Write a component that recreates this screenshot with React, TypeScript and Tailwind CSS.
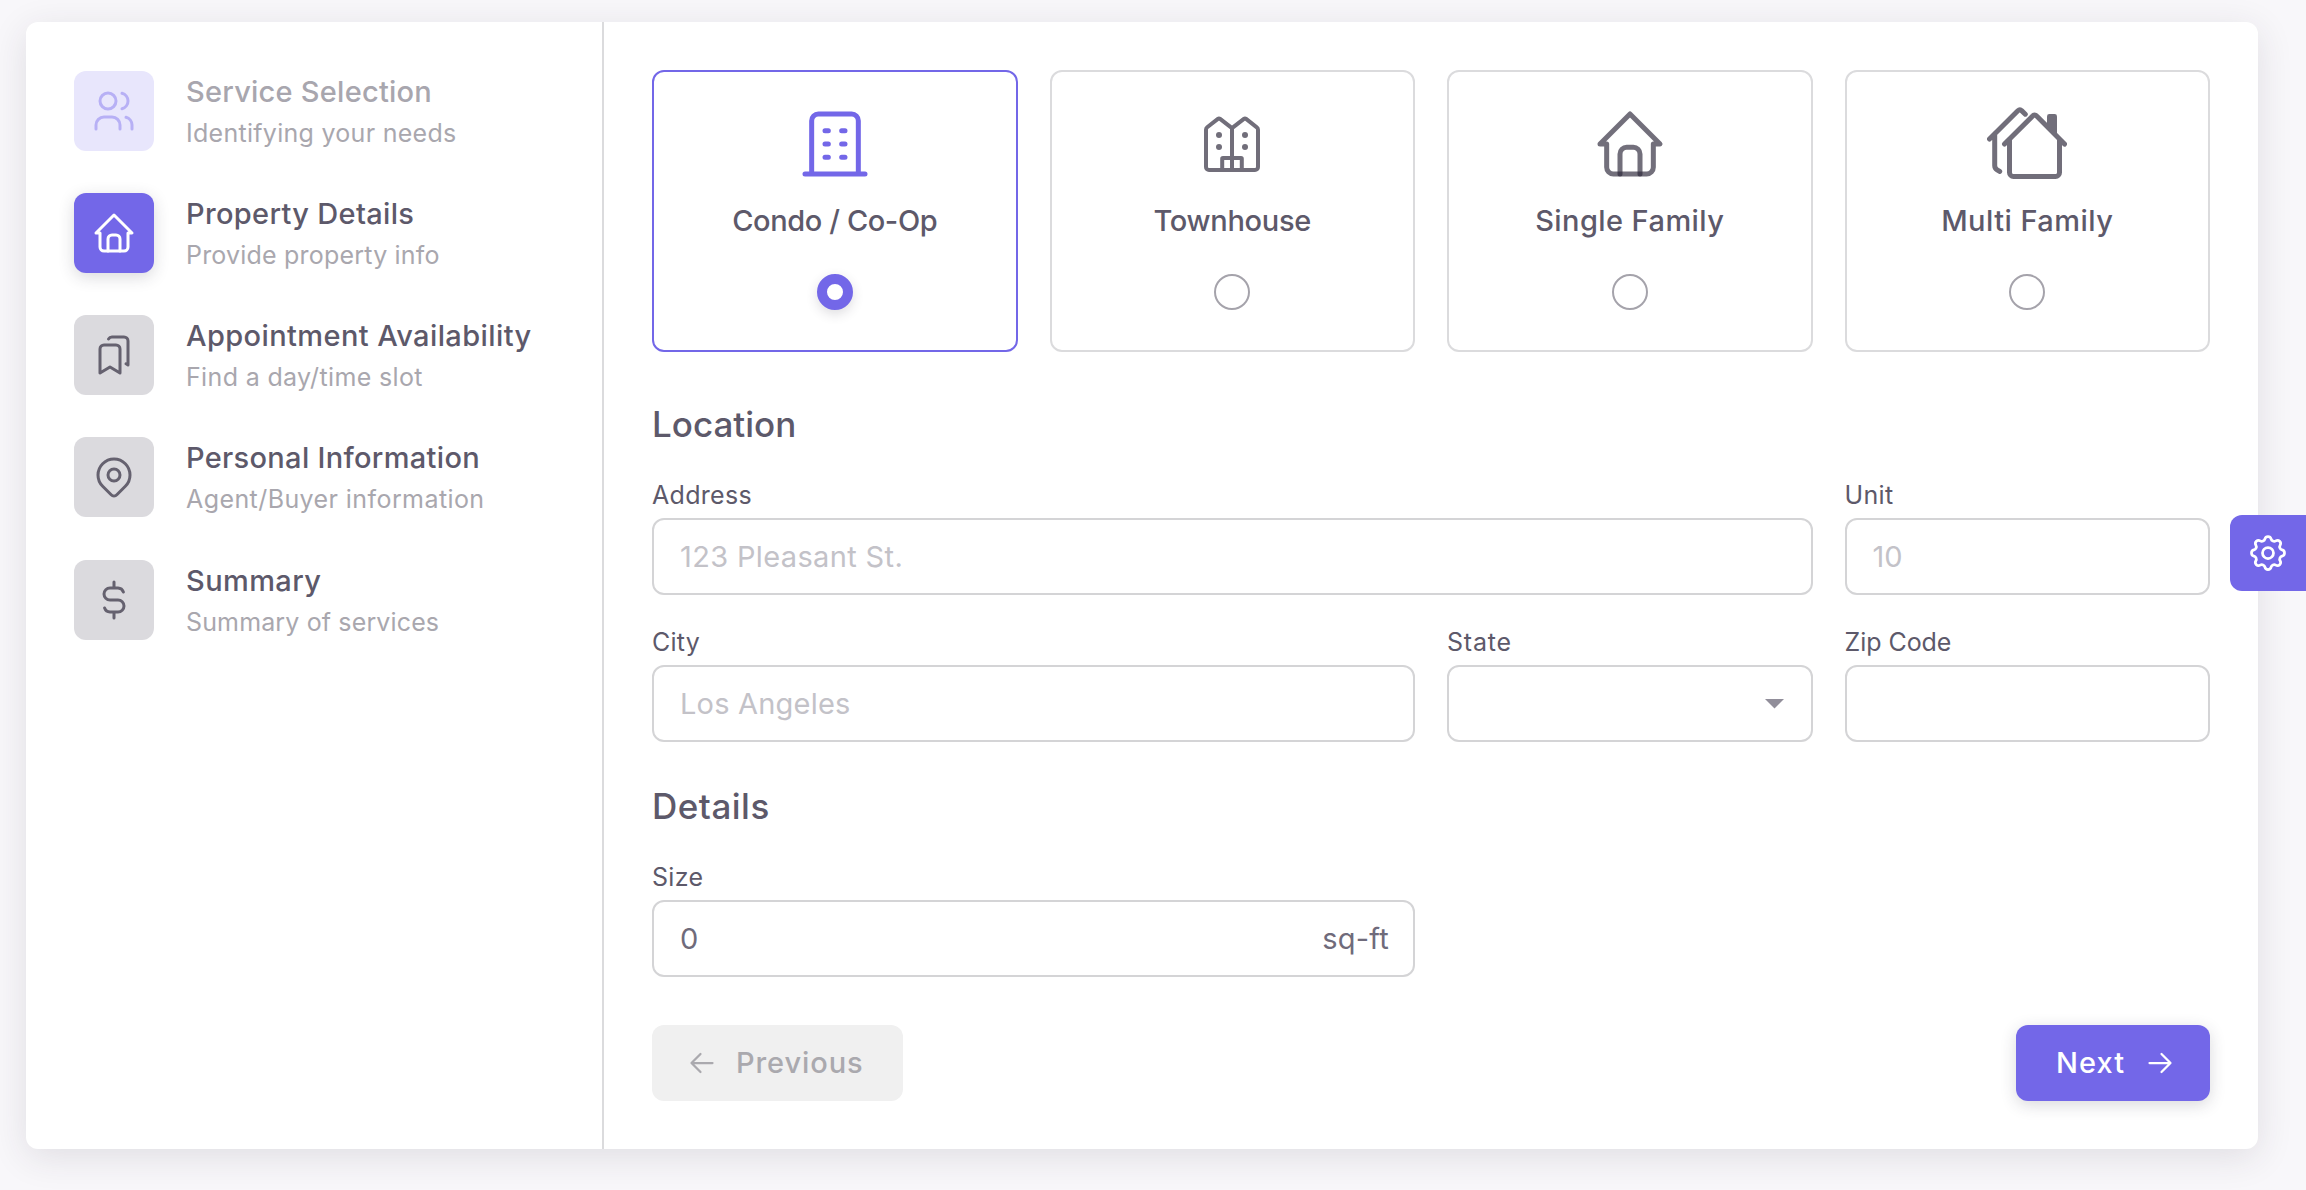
import type { ReactNode } from "react";

function TablerIcon({ size, children, stroke = 1.5 }: { size: number; children: ReactNode; stroke?: number }) {
  return (
    <svg
      width={size}
      height={size}
      viewBox="0 0 24 24"
      fill="none"
      stroke="currentColor"
      strokeWidth={stroke}
      strokeLinecap="round"
      strokeLinejoin="round"
      className="shrink-0"
    >
      {children}
    </svg>
  );
}

const homePaths = (
  <>
    <path d="M5 12H3l9-9l9 9h-2M5 12v7a2 2 0 0 0 2 2h10a2 2 0 0 0 2-2v-7" />
    <path d="M9 21v-6a2 2 0 0 1 2-2h2a2 2 0 0 1 2 2v6" />
  </>
);

const usersIcon = (
  <>
    <circle cx="9" cy="7" r="4" />
    <path d="M3 21v-2a4 4 0 0 1 4-4h4a4 4 0 0 1 4 4v2" />
    <path d="M16 3.13a4 4 0 0 1 0 7.75M21 21v-2a4 4 0 0 0-3-3.85" />
  </>
);

const bookmarksIcon = (
  <>
    <path d="M13 7a2 2 0 0 1 2 2v12l-5-3l-5 3v-12a2 2 0 0 1 2-2h6z" />
    <path d="M9.265 4a2 2 0 0 1 1.735-1h6a2 2 0 0 1 2 2v12l-1-.6" />
  </>
);

const mapPinIcon = (
  <>
    <circle cx="12" cy="11" r="3" />
    <path d="M17.657 16.657L13.414 20.9a2 2 0 0 1-2.827 0l-4.244-4.243a8 8 0 1 1 11.314 0z" />
  </>
);

const dollarIcon = (
  <path d="M16.7 8a3 3 0 0 0-2.7-2h-4a3 3 0 0 0 0 6h4a3 3 0 0 1 0 6h-4a3 3 0 0 1-2.7-2M12 3v3m0 12v3" />
);

type StepState = "done" | "active" | "todo";

const steps: { title: string; sub: string; icon: ReactNode; state: StepState; track: string; subTrack: string }[] = [
  { title: "Service Selection", sub: "Identifying your needs", icon: usersIcon, state: "done", track: "tracking-[0.24px]", subTrack: "tracking-[0.28px]" },
  { title: "Property Details", sub: "Provide property info", icon: homePaths, state: "active", track: "tracking-[0.33px]", subTrack: "tracking-[0.2px]" },
  { title: "Appointment Availability", sub: "Find a day/time slot", icon: bookmarksIcon, state: "todo", track: "tracking-[0.4px]", subTrack: "tracking-[0.35px]" },
  { title: "Personal Information", sub: "Agent/Buyer information", icon: mapPinIcon, state: "todo", track: "tracking-[0.31px]", subTrack: "tracking-[0.42px]" },
  { title: "Summary", sub: "Summary of services", icon: dollarIcon, state: "todo", track: "tracking-[0.4px]", subTrack: "tracking-[0.14px]" },
];

const stepBox: Record<StepState, string> = {
  done: "bg-[#e8e6fc] text-[#b7b0f5]",
  active: "bg-[#7367e8] text-white shadow-[0_4px_16px_rgba(47,43,61,0.18)]",
  todo: "bg-[#dbdade] text-[#65616f]",
};

function Step({ step }: { step: (typeof steps)[number] }) {
  return (
    <div className="flex gap-8">
      <div className={`flex size-20 shrink-0 items-center justify-center rounded-xl ${stepBox[step.state]}`}>
        <TablerIcon size={48}>{step.icon}</TablerIcon>
      </div>
      <div className="h-20 whitespace-nowrap">
        <div
          className={`text-[29px] leading-[41px] font-medium ${step.track} ${
            step.state === "done" ? "text-[#a8a6ae]" : "text-[#5d596a]"
          }`}
        >
          {step.title}
        </div>
        <div className={`mt-0.5 text-[25px] leading-[38px] text-[#a9a7ae] ${step.subTrack}`}>{step.sub}</div>
      </div>
    </div>
  );
}

const buildingIcon = (
  <TablerIcon size={80}>
    <path d="M3 21h18M5 21V5a2 2 0 0 1 2-2h10a2 2 0 0 1 2 2v16M9 8h1M9 12h1M9 16h1M14 8h1M14 12h1M14 16h1" />
  </TablerIcon>
);

const townhouseIcon = (
  <svg width="56" height="56" viewBox="0 0 56 56" fill="none" stroke="currentColor" strokeWidth="4" strokeLinejoin="round">
    <path d="M28 12.2V54M28 12.2L16.1 2.9a1.8 1.8 0 0 0-2.2 0L3.2 11.3A3 3 0 0 0 2 13.7V51a3 3 0 0 0 3 3H51a3 3 0 0 0 3-3V13.7a3 3 0 0 0-1.2-2.4L42.1 2.9a1.8 1.8 0 0 0-2.2 0L28 12.2M18.2 54V42.8a.8.8 0 0 1 .8-.8H37a.8.8 0 0 1 .8.8V54" />
    <g fill="currentColor" stroke="none">
      <circle cx="15" cy="19" r="3" />
      <circle cx="15" cy="31" r="3" />
      <circle cx="41" cy="19" r="3" />
      <circle cx="41" cy="31" r="3" />
    </g>
  </svg>
);

const houseIcon = (
  <svg
    width="80"
    height="80"
    viewBox="0 0 24 24"
    fill="none"
    stroke="#2f2b3d"
    strokeOpacity="0.68"
    strokeWidth="1.5"
    strokeLinecap="round"
    strokeLinejoin="round"
  >
    {homePaths}
  </svg>
);

const multiIcon = (
  <svg width="80" height="80" viewBox="0 0 80 80" fill="none" stroke="currentColor" strokeWidth="5" strokeLinecap="round" strokeLinejoin="round">
    <path d="M38.3 10.2L34.6 6.6a2.4 2.4 0 0 0-3.5 0L2.5 35.1M7.7 31V61.5a5 5 0 0 0 2.4 4.3L12.7 67.4" />
    <path d="M17.5 40.1L45.9 11.7a2.4 2.4 0 0 1 3.5 0L77.5 40.1M22.5 36V68.5a4 4 0 0 0 4 4H68.5a4 4 0 0 0 4-4V36" />
    <path d="M60 12.4a2.4 2.4 0 0 1 2.4-2.4h5.2a2.4 2.4 0 0 1 2.4 2.4V31.5L60 22Z" fill="currentColor" stroke="none" />
  </svg>
);

const properties = [
  { label: "Condo / Co-Op", icon: buildingIcon, selected: true, track: "tracking-[-0.4px]" },
  { label: "Townhouse", icon: townhouseIcon, selected: false, track: "tracking-[-0.28px]" },
  { label: "Single Family", icon: houseIcon, selected: false, track: "tracking-[0.42px]" },
  { label: "Multi Family", icon: multiIcon, selected: false, track: "tracking-[0.46px]" },
];

function PropertyCard({ item }: { item: (typeof properties)[number] }) {
  return (
    <button
      className={`flex h-[282px] flex-col items-center rounded-xl border-2 pt-8 ${
        item.selected ? "border-[#7367e8]" : "border-[#dbdbdd]"
      }`}
    >
      <span className={`flex size-20 items-center justify-center ${item.selected ? "text-[#7367e8]" : "text-[#716e7a]"}`}>
        {item.icon}
      </span>
      <span className={`mt-[15px] text-[29px] leading-[44px] font-medium whitespace-nowrap text-[#5d596a] ${item.track}`}>
        {item.label}
      </span>
      {item.selected ? (
        <span className="mt-[31px] size-9 rounded-full border-[10px] border-[#7367e8] bg-white shadow-[0_4px_12px_rgba(47,43,61,0.16)]" />
      ) : (
        <span className="mt-[31px] size-9 rounded-full border-2 border-[#a5a3ab]" />
      )}
    </button>
  );
}

function Field({ label, track, className = "", children }: { label: string; track: string; className?: string; children?: ReactNode }) {
  return (
    <div className={className}>
      <div className={`text-[25px] leading-9 text-[#5d596a] ${track}`}>{label}</div>
      <div className="mt-[5px] flex h-[77px] items-center justify-between rounded-xl border-2 border-[#d4d4d6] pr-6 pl-[26px] text-[29px] leading-[44px]">
        {children}
      </div>
    </div>
  );
}

export default function App() {
  return (
    <div className="relative h-[1190px] w-[2306px] overflow-hidden bg-[#f8f7fa] pt-[22px] pl-[26px] font-['Inter',sans-serif]">
      <div className="flex h-[1127px] w-[2232px] rounded-xl bg-white shadow-[0_8px_36px_rgba(47,43,61,0.12)]">
        <aside className="flex w-[578px] shrink-0 flex-col gap-[42.12px] border-r-2 border-[#dbdbdd] pt-[49.1px] pl-12">
          {steps.map((s) => (
            <Step key={s.title} step={s} />
          ))}
        </aside>

        <main className="flex-1 p-12">
          <div className="grid grid-cols-4 gap-x-8">
            {properties.map((p) => (
              <PropertyCard key={p.label} item={p} />
            ))}
          </div>

          <h2 className="mt-[47px] text-[35px] leading-[50px] font-medium text-[#5d596a]">Location</h2>
          <div className="mt-7 grid grid-cols-4 gap-x-8 gap-y-[29px]">
            <Field label="Address" track="tracking-[0.31px]" className="col-span-3">
              <span className="tracking-[0.36px] text-[#c3c2c8]">123 Pleasant St.</span>
            </Field>
            <Field label="Unit" track="tracking-[0.36px]">
              <span className="text-[#c3c2c8]">10</span>
            </Field>
            <Field label="City" track="tracking-[0.24px]" className="col-span-2">
              <span className="tracking-[0.2px] text-[#c3c2c8]">Los Angeles</span>
            </Field>
            <Field label="State" track="tracking-[0.8px]">
              <span />
              <svg width="19" height="10" viewBox="0 0 19 10" className="mt-px mr-[3px] fill-[#918e9a]">
                <path d="M0 0h19l-9.500 9.500z" />
              </svg>
            </Field>
            <Field label="Zip Code" track="tracking-[-0.05px]" />
          </div>

          <h2 className="mt-[39px] text-[35px] leading-[50px] font-medium tracking-[0.5px] text-[#5d596a]">Details</h2>
          <div className="mt-7 grid grid-cols-4 gap-x-8">
            <Field label="Size" track="tracking-[0.32px]" className="col-span-2">
              <span className="text-[#6f6b7b]">0</span>
              <span className="tracking-[0.21px] text-[#6f6b7b]">sq-ft</span>
            </Field>
          </div>

          <div className="mt-12 flex justify-between text-[29px] leading-[44px] font-medium">
            <button className="flex h-19 w-[251px] items-center gap-4 rounded-xl bg-[#f0f0f0] pl-8 text-[#aaa9ae]">
              <TablerIcon size={36}>
                <path d="M5 12h14M5 12l6 6M5 12l6-6" />
              </TablerIcon>
              <span className="tracking-[0.9px]">Previous</span>
            </button>
            <button className="flex h-19 w-[194px] items-center gap-[17px] rounded-xl bg-[#7367e8] pl-10 text-white shadow-[0_4px_16px_rgba(47,43,61,0.18)]">
              <span className="tracking-[1.1px]">Next</span>
              <TablerIcon size={36}>
                <path d="M5 12h14M13 18l6-6M13 6l6 6" />
              </TablerIcon>
            </button>
          </div>
        </main>
      </div>

      {/* Settings handle pinned to the right edge, over the card */}
      <button className="absolute top-[515px] right-0 flex h-19 w-19 items-center justify-center rounded-l-xl bg-[#7367e8] text-white">
        <TablerIcon size={44}>
          <path d="M10.325 4.317c.426-1.756 2.924-1.756 3.35 0a1.724 1.724 0 0 0 2.573 1.066c1.543-.94 3.31.826 2.37 2.37a1.724 1.724 0 0 0 1.065 2.572c1.756.426 1.756 2.924 0 3.35a1.724 1.724 0 0 0-1.066 2.573c.94 1.543-.826 3.31-2.37 2.37a1.724 1.724 0 0 0-2.572 1.065c-.426 1.756-2.924 1.756-3.35 0a1.724 1.724 0 0 0-2.573-1.066c-1.543.94-3.31-.826-2.37-2.37a1.724 1.724 0 0 0-1.065-2.572c-1.756-.426-1.756-2.924 0-3.35a1.724 1.724 0 0 0 1.066-2.573c-.94-1.543.826-3.31 2.37-2.37c1 .608 2.296.07 2.572-1.065z" />
          <circle cx="12" cy="12" r="3" />
        </TablerIcon>
      </button>
    </div>
  );
}
